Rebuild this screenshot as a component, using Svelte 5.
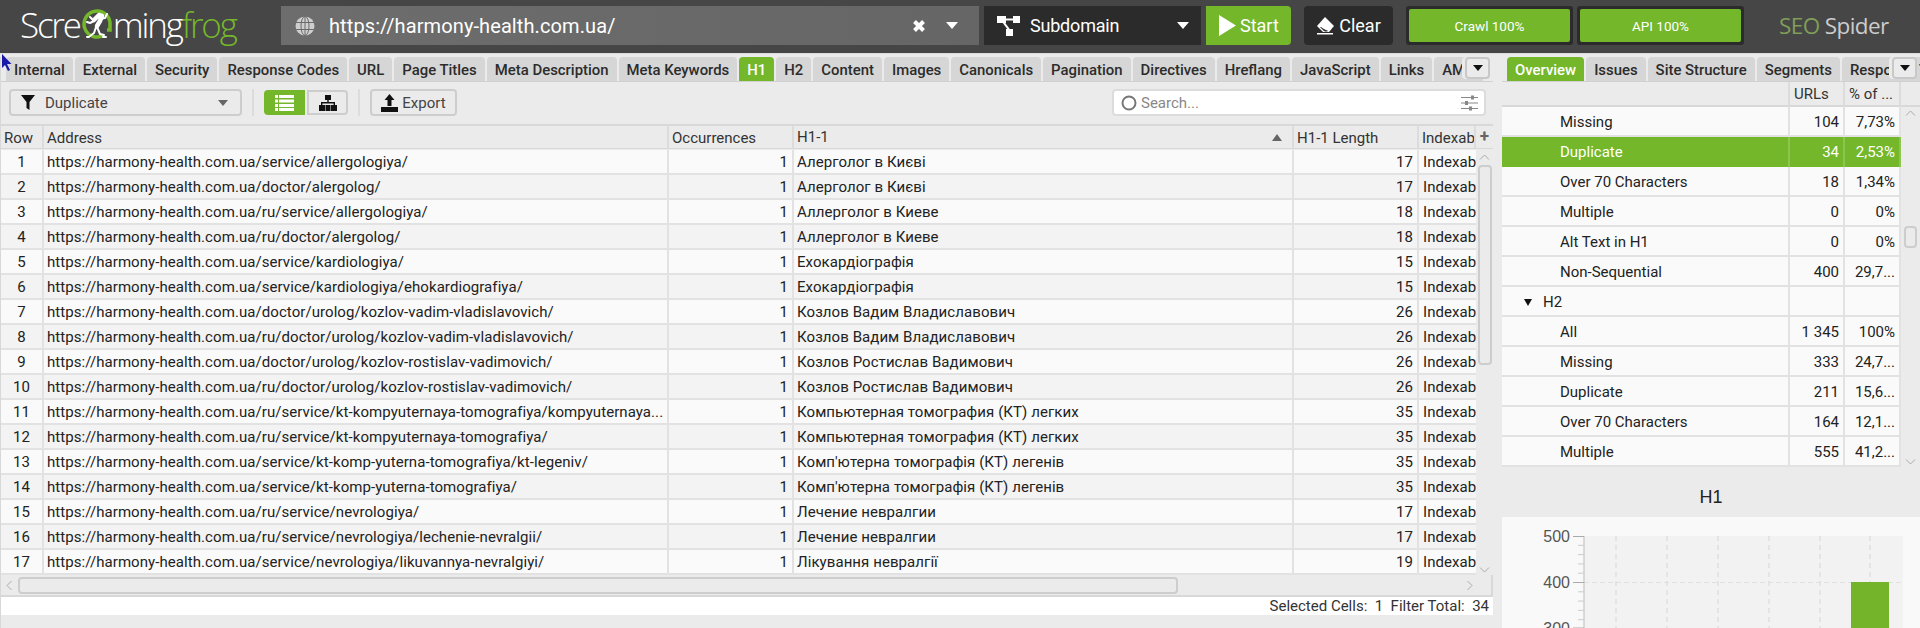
<script>
  const leftTabs = ['Internal','External','Security','Response Codes','URL','Page Titles','Meta Description','Meta Keywords','H1','H2','Content','Images','Canonicals','Pagination','Directives','Hreflang','JavaScript','Links','AMP'];
  const rightTabs = ['Overview','Issues','Site Structure','Segments','Response Times'];

  const base = 'https://harmony-health.com.ua/';
  const rows = [
    ['service/allergologiya/','Алерголог в Києві',17],
    ['doctor/alergolog/','Алерголог в Києві',17],
    ['ru/service/allergologiya/','Аллерголог в Киеве',18],
    ['ru/doctor/alergolog/','Аллерголог в Киеве',18],
    ['service/kardiologiya/','Ехокардіографія',15],
    ['service/kardiologiya/ehokardiografiya/','Ехокардіографія',15],
    ['doctor/urolog/kozlov-vadim-vladislavovich/','Козлов Вадим Владиславович',26],
    ['ru/doctor/urolog/kozlov-vadim-vladislavovich/','Козлов Вадим Владиславович',26],
    ['doctor/urolog/kozlov-rostislav-vadimovich/','Козлов Ростислав Вадимович',26],
    ['ru/doctor/urolog/kozlov-rostislav-vadimovich/','Козлов Ростислав Вадимович',26],
    ['ru/service/kt-kompyuternaya-tomografiya/kompyuternaya...','Компьютерная томография (КТ) легких',35],
    ['ru/service/kt-kompyuternaya-tomografiya/','Компьютерная томография (КТ) легких',35],
    ['service/kt-komp-yuterna-tomografiya/kt-legeniv/','Комп\'ютерна томографія (КТ) легенів',35],
    ['service/kt-komp-yuterna-tomografiya/','Комп\'ютерна томографія (КТ) легенів',35],
    ['ru/service/nevrologiya/','Лечение невралгии',17],
    ['ru/service/nevrologiya/lechenie-nevralgii/','Лечение невралгии',17],
    ['service/nevrologiya/likuvannya-nevralgiyi/','Лікування невралгії',19]
  ];

  const overview = [
    { name: 'Missing', urls: '104', pct: '7,73%' },
    { name: 'Duplicate', urls: '34', pct: '2,53%', selected: true },
    { name: 'Over 70 Characters', urls: '18', pct: '1,34%' },
    { name: 'Multiple', urls: '0', pct: '0%' },
    { name: 'Alt Text in H1', urls: '0', pct: '0%' },
    { name: 'Non-Sequential', urls: '400', pct: '29,7...' },
    { name: 'H2', urls: '', pct: '', group: true },
    { name: 'All', urls: '1 345', pct: '100%' },
    { name: 'Missing', urls: '333', pct: '24,7...' },
    { name: 'Duplicate', urls: '211', pct: '15,6...' },
    { name: 'Over 70 Characters', urls: '164', pct: '12,1...' },
    { name: 'Multiple', urls: '555', pct: '41,2...' }
  ];

  const gridX = [114, 165, 216, 267, 318, 368];
  const minorTicks = [];
  for (let i = 1; i < 12; i++) if (i % 5) minorTicks.push(19 + i * 9.3);
</script>

<div class="app">
  <header class="topbar">
    <div class="logo">
      <span>Scre</span>
      <svg class="frog" width="32" height="34" viewBox="0 0 32 34">
        <path d="M23 27a13 13 0 1 1 6-10v5h-3" fill="none" stroke="#74b72a" stroke-width="3.500"/>
        <g fill="none" stroke="#fff" stroke-linecap="round" stroke-linejoin="round">
          <path d="M13 12l5-5 3 1-2 5-3 5" stroke-width="4.500"/>
          <path d="M19 11l5-1 2-4M9 9l4 4-4 2-3-1M15 19l-2 6-4 3M16 19l3 7 4 1M8 29h-2M22 29h3" stroke-width="2"/>
        </g>
      </svg>
      <span>ming</span><span class="logo-green">frog</span>
    </div>

    <div class="urlbar">
      <svg width="20" height="20" viewBox="0 0 20 20" fill="none">
        <circle cx="10" cy="10" r="9.500" fill="#cfcfcf"/>
        <g stroke="#6a6a6a" stroke-width="1">
          <ellipse cx="10" cy="10" rx="4" ry="9.500"/>
          <path d="M1 6.500h18M1 13.500h18M10 0v20"/>
        </g>
      </svg>
      <span class="url">https://harmony-health.com.ua/</span>
      <svg class="url-x" width="14" height="14" viewBox="0 0 14 14"><path d="M2.500 2.500l9 9M11.500 2.500l-9 9" stroke="#fff" stroke-width="4"/></svg>
      <span class="caret"></span>
    </div>

    <div class="mode">
      <svg width="24" height="22" viewBox="0 0 24 22" fill="#fff">
        <rect x="0" y="1" width="9" height="7"/><rect x="16" y="1" width="7" height="7"/><rect x="9" y="14" width="7" height="7"/>
        <path d="M8 3.500h9v2H8zM5 7l6 8 1.600-1.200-6-8z"/>
      </svg>
      <span>Subdomain</span>
      <span class="caret"></span>
    </div>

    <div class="start">
      <svg width="17" height="21" viewBox="0 0 17 21"><path d="M0 0l17 10.500L0 21z" fill="#fff"/></svg>
      <span>Start</span>
    </div>

    <div class="clear">
      <svg width="19" height="19" viewBox="0 0 19 19" fill="#fff"><path d="M9 1l9 9-5 6H7l-6-6z"/><path d="M4.500 11l4 4h3" fill="#2b2b2b" stroke="#2b2b2b"/><path d="M1 17h16v1.500H1z"/></svg>
      <span>Clear</span>
    </div>

    <div class="progress"><div>Crawl 100%</div></div>
    <div class="progress second"><div>API 100%</div></div>

    <div class="brand"><span>SEO</span> Spider</div>
  </header>

  <main class="panes">
    <section class="left">
      <nav class="tabs">
        {#each leftTabs as tab}
          <span class="tab" class:active={tab === 'H1'}>{tab}</span>
        {/each}
        <button class="more"><i></i></button>
      </nav>

      <div class="toolbar">
        <div class="filter">
          <svg width="14" height="15" viewBox="0 0 14 15"><path d="M0 0h14L8.500 7v8L5.500 13V7z" fill="#111"/></svg>
          <span>Duplicate</span>
          <i class="filter-caret"></i>
        </div>
        <div class="sep"></div>
        <div class="view on">
          <svg width="19" height="16" viewBox="0 0 19 16" fill="#fff"><path d="M0 0h3v3H0zM4 0h15v3H4zM0 4.500h3v3H0zM4 4.500h15v3H4zM0 9h3v3H0zM4 9h15v3H4zM0 13h3v3H0zM4 13h15v3H4z"/></svg>
        </div>
        <div class="view">
          <svg width="18" height="16" viewBox="0 0 18 16" fill="#111"><path d="M6 0h6v5H6zM8.300 5h1.400v3H8.300zM2 7h14v3h-1.400V8.400H3.400V10H2zM0 10h6v6H0zM6.500 10h5v6h-5zM12 10h6v6h-6z"/></svg>
        </div>
        <div class="sep"></div>
        <div class="export">
          <svg width="17" height="18" viewBox="0 0 17 18" fill="#111"><path d="M8.500 0l5 6h-3v6h-4V6h-3zM0 13h17v5H0z"/></svg>
          <span>Export</span>
        </div>
        <div class="search">
          <svg width="16" height="16" viewBox="0 0 16 16"><circle cx="8" cy="8" r="6.500" fill="none" stroke="#777" stroke-width="2"/></svg>
          <span>Search...</span>
          <svg class="sliders" width="17" height="16" viewBox="0 0 17 16" fill="#888"><path d="M0 2h17v1H0zM0 7.500h17v1H0zM0 13h17v1H0z"/><path d="M10 0.500h3v4h-3zM4 6h3v4H4zM8 11.500h3v4H8z"/></svg>
        </div>
      </div>

      <div class="thead grid">
        <div class="th">Row</div>
        <div class="th">Address</div>
        <div class="th">Occurrences</div>
        <div class="th sorted">H1-1<i class="sort"></i></div>
        <div class="th">H1-1 Length</div>
        <div class="th">Indexab</div>
        <div class="plus">+</div>
      </div>

      <div class="tbody">
        <div class="rows">
          {#each rows as r, i}
            <div class="row grid" class:alt={i % 2}>
              <div class="c num">{i + 1}</div>
              <div class="c addr">{base}{r[0]}</div>
              <div class="c end">1</div>
              <div class="c title">{r[1]}</div>
              <div class="c end">{r[2]}</div>
              <div class="c index">Indexab</div>
            </div>
          {/each}
        </div>
        <div class="vscroll">
          <svg class="arrow up" width="11" height="6" viewBox="0 0 11 6"><path d="M1 5.500l4.500-4.500 4.500 4.500" fill="none" stroke="#aaa"/></svg>
          <div class="thumb-v"></div>
          <svg class="arrow down" width="11" height="6" viewBox="0 0 11 6"><path d="M1 .5l4.500 4.500 4.500-4.500" fill="none" stroke="#aaa"/></svg>
        </div>
      </div>

      <div class="hscroll">
        <svg width="6" height="11" viewBox="0 0 6 11"><path d="M5.500 1L1 5.500l4.500 4.500" fill="none" stroke="#aaa"/></svg>
        <div class="thumb-h"></div>
        <svg width="6" height="11" viewBox="0 0 6 11"><path d="M.5 1L5 5.500.5 10" fill="none" stroke="#aaa"/></svg>
      </div>

      <div class="status">Selected Cells:&nbsp; 1 &nbsp;Filter Total:&nbsp; 34</div>
    </section>

    <section class="side">
      <nav class="tabs">
        {#each rightTabs as tab}
          <span class="tab" class:active={tab === 'Overview'}>{tab}</span>
        {/each}
        <button class="more"><i></i></button>
      </nav>

      <div class="ohead ogrid">
        <div class="oh"></div>
        <div class="oh">URLs</div>
        <div class="oh">% of ...</div>
      </div>

      <div class="obody">
        <div class="orows">
          {#each overview as o}
            <div class="orow ogrid" class:selected={o.selected}>
              <div class="oname" class:group={o.group}>
                {#if o.group}<i class="tree"></i>{/if}{o.name}
              </div>
              <div class="oval">{o.urls}</div>
              <div class="oval">{o.pct}</div>
            </div>
          {/each}
        </div>
        <div class="oscroll">
          <svg width="11" height="6" viewBox="0 0 11 6"><path d="M1 5.500l4.500-4.500 4.500 4.500" fill="none" stroke="#aaa"/></svg>
          <div class="thumb-o"></div>
          <svg class="oscroll-down" width="11" height="6" viewBox="0 0 11 6"><path d="M1 .5l4.500 4.500 4.500-4.500" fill="none" stroke="#aaa"/></svg>
        </div>
      </div>

      <h2 class="chart-title">H1</h2>

      <div class="chart">
        <svg width="418" height="111" viewBox="0 0 418 111">
          <rect x="82" y="19" width="319" height="92" fill="#f2f2f2"/>
          {#each gridX as x}
            <line x1={x} x2={x} y1="19" y2="111" stroke="#e0e0e0" stroke-width="1.500" stroke-dasharray="5 4"/>
          {/each}
          <line x1="82" x2="401" y1="65.500" y2="65.500" stroke="#e0e0e0" stroke-dasharray="5 3"/>
          <rect x="349" y="65" width="38" height="46" fill="#74b42a"/>
          <line x1="82" x2="82" y1="19" y2="111" stroke="#bbb"/>
          {#each minorTicks as y}
            <line x1="76" x2="82" y1={y} y2={y} stroke="#ccc"/>
          {/each}
          <line x1="71" x2="82" y1="19.500" y2="19.500" stroke="#aaa"/>
          <line x1="71" x2="82" y1="65.500" y2="65.500" stroke="#aaa"/>
          <line x1="71" x2="82" y1="111" y2="111" stroke="#aaa"/>
          <text class="tick" x="68" y="25" text-anchor="end">500</text>
          <text class="tick" x="68" y="71" text-anchor="end">400</text>
          <text class="tick" x="68" y="117" text-anchor="end">300</text>
        </svg>
      </div>
    </section>
  </main>

  <svg class="cursor" width="11" height="17" viewBox="0 0 11 17"><path d="M1 0v14l3-3 3 6 2-1-3-6h4.500z" fill="#1a1aa8"/></svg>
</div>

<style>
  :global(body) {
    margin: 0;
    background: #ebebeb;
  }

  .app {
    position: relative;
    width: 1920px;
    height: 628px;
    overflow: hidden;
    display: flex;
    flex-direction: column;
    background: #ebebeb;
    font-family: Roboto, "Liberation Sans", sans-serif;
    font-size: 15px;
    color: #222;
  }

  /* top bar */
  .topbar {
    flex: none;
    height: 53px;
    box-sizing: border-box;
    padding: 6px 0 7px 20px;
    display: flex;
    align-items: stretch;
    background: #464646;
    border-bottom: 1px solid #464646;
    color: #fff;
  }

  .logo {
    width: 261px;
    display: flex;
    align-items: center;
    font-family: "Open Sans", sans-serif;
    font-weight: 300;
    font-size: 35px;
    letter-spacing: -2.2px;
    margin-top: -2px;
    white-space: nowrap;
  }
  .logo-green { color: #74b72a; }
  .frog { margin: 0 0 0 1px; flex: none; }

  .urlbar {
    width: 698px;
    box-sizing: border-box;
    padding: 0 21px 0 14px;
    display: flex;
    align-items: center;
    background: linear-gradient(90deg, #6d6d6d, #666);
  }
  .url {
    margin-left: 14px;
    font-size: 20px;
    letter-spacing: 0.1px;
    flex: 1;
  }
  .url-x { margin-right: 20px; }
  .caret {
    width: 0;
    height: 0;
    border-left: 6px solid transparent;
    border-right: 6px solid transparent;
    border-top: 7px solid #fff;
  }

  .mode {
    width: 217px;
    margin-left: 5px;
    box-sizing: border-box;
    padding: 0 12px 0 13px;
    display: flex;
    align-items: center;
    background: #2b2b2b;
    font-size: 18px;
    letter-spacing: -0.2px;
  }
  .mode span:nth-child(2) { margin-left: 9px; flex: 1; }

  .start {
    width: 85px;
    margin-left: 5px;
    box-sizing: border-box;
    padding-left: 13px;
    display: flex;
    align-items: center;
    gap: 4px;
    background: #74b72a;
    border-radius: 0 4px 4px 0;
    font-size: 18px;
  }

  .clear {
    width: 89px;
    margin-left: 13px;
    display: flex;
    align-items: center;
    justify-content: center;
    gap: 4px;
    background: #2b2b2b;
    border-radius: 4px;
    font-size: 18px;
  }

  .progress {
    width: 167px;
    margin-left: 13px;
    box-sizing: border-box;
    padding: 3px;
    background: #2b2b2b;
    border-radius: 3px;
  }
  .progress.second { margin-left: 4px; }
  .progress div {
    height: 100%;
    display: flex;
    align-items: center;
    justify-content: center;
    background: #74b72a;
    border-radius: 2px;
    font-size: 13.500px;
  }

  .brand {
    margin-left: 35px;
    align-self: center;
    font-family: "Open Sans", sans-serif;
    font-size: 22.500px;
    letter-spacing: -0.6px;
    color: #ccc;
    white-space: nowrap;
  }
  .brand span { color: #7f9e58; }

  /* panes */
  .panes {
    flex: 1;
    min-height: 0;
    display: flex;
    border-top: 1px solid #ddd;
    padding-top: 3px;
  }
  .left {
    width: 1493px;
    flex: none;
    box-sizing: border-box;
    border-left: 1px solid #d8d8d8;
    display: flex;
    flex-direction: column;
  }
  .side {
    width: 418px;
    margin-left: 9px;
    flex: none;
    display: flex;
    flex-direction: column;
  }

  /* tabs */
  .tabs {
    position: relative;
    flex: none;
    height: 25px;
    box-sizing: border-box;
    padding-left: 5px;
    display: flex;
    gap: 2px;
    overflow: hidden;
    border-bottom: 1px solid #d0d0d0;
  }
  .tab {
    flex: none;
    padding: 0 8px;
    line-height: 26px;
    background: #d6d6d6;
    border-radius: 4px 4px 0 0;
    font-weight: 500;
    font-size: 14.900px;
    color: #2c2c2c;
    white-space: nowrap;
  }
  .tab.active {
    background: #74b72a;
    color: #fff;
  }
  .more {
    position: absolute;
    right: 3px;
    top: 0;
    width: 25px;
    height: 22px;
    padding: 0;
    display: flex;
    align-items: center;
    justify-content: center;
    background: #ebebeb;
    border: 2px solid #c8c8c8;
    border-radius: 4px;
    box-shadow: -3px 0 0 #ebebeb;
  }
  .more i {
    border-left: 5px solid transparent;
    border-right: 5px solid transparent;
    border-top: 6px solid #111;
  }

  /* toolbar */
  .toolbar {
    flex: none;
    height: 42px;
    box-sizing: border-box;
    padding: 7px 7px 8px 8px;
    display: flex;
    align-items: stretch;
  }
  .filter {
    width: 233px;
    box-sizing: border-box;
    padding: 0 12px 0 10px;
    display: flex;
    align-items: center;
    gap: 10px;
    border: 2px solid #cdcdcd;
    border-radius: 4px;
    color: #444;
  }
  .filter span { flex: 1; }
  .filter-caret {
    border-left: 5px solid transparent;
    border-right: 5px solid transparent;
    border-top: 6px solid #666;
  }
  .sep {
    width: 2px;
    margin: 0 10px;
    background: #dcdcdc;
  }
  .view {
    width: 41px;
    margin-top: 1px;
    margin-bottom: 1px;
    box-sizing: border-box;
    display: flex;
    align-items: center;
    justify-content: center;
    border: 2px solid #cdcdcd;
    border-radius: 0 4px 4px 0;
  }
  .view.on {
    margin-right: 2px;
    background: #74b72a;
    border-color: #74b72a;
    border-radius: 4px 0 0 4px;
  }
  .export {
    width: 87px;
    box-sizing: border-box;
    display: flex;
    align-items: center;
    justify-content: center;
    gap: 4px;
    border: 2px solid #cdcdcd;
    border-radius: 4px;
    color: #444;
  }
  .search {
    width: 374px;
    margin-left: auto;
    box-sizing: border-box;
    padding: 0 6px 0 7px;
    display: flex;
    align-items: center;
    gap: 4px;
    background: #fff;
    border: 2px solid #dcdcdc;
    border-radius: 4px;
    color: #888;
  }
  .search span { flex: 1; }

  /* table */
  .grid {
    display: grid;
    grid-template-columns: 43px 625px 125px 500px 125px 57px;
  }
  .thead {
    flex: none;
    height: 25px;
    grid-template-columns: 43px 625px 125px 500px 125px 57px 17px;
    border-top: 2px solid #d8d8d8;
    border-bottom: 1px solid #d8d8d8;
    box-sizing: border-box;
  }
  .th {
    padding-left: 3px;
    line-height: 24px;
    border-right: 2px solid #dcdcdc;
    white-space: nowrap;
    overflow: hidden;
    color: #333;
  }
  .sorted {
    display: flex;
    align-items: center;
    justify-content: space-between;
  }
  .sort {
    margin-right: 10px;
    border-left: 5px solid transparent;
    border-right: 5px solid transparent;
    border-bottom: 7px solid #666;
  }
  .plus {
    text-align: center;
    line-height: 20px;
    font-weight: 700;
    font-size: 17px;
    color: #666;
  }

  .tbody {
    flex: none;
    height: 425px;
    display: flex;
    overflow: hidden;
    margin-top: 1px;
  }
  .rows { width: 1475px; flex: none; }
  .row {
    height: 25px;
    box-sizing: border-box;
    border-bottom: 2px solid #e2e2e2;
    background: #fafafa;
  }
  .row.alt { background: #f3f3f3; }
  .c {
    line-height: 25px;
    border-right: 2px solid #e2e2e2;
    white-space: nowrap;
    overflow: hidden;
    letter-spacing: 0.07px;
    color: #222;
  }
  .num { text-align: center; }
  .addr { padding-left: 3px; }
  .end { text-align: right; padding-right: 4px; }
  .title { padding-left: 3px; }
  .index { padding-left: 4px; border-right: 0; }

  .vscroll {
    flex: 1;
    position: relative;
    display: flex;
    flex-direction: column;
    align-items: center;
    padding-top: 4px;
  }
  .thumb-v {
    width: 10px;
    height: 196px;
    margin-top: 5px;
    border: 2px solid #cdcdcd;
    border-radius: 4px;
  }
  .vscroll .down { margin-top: auto; margin-bottom: 2px; }

  .hscroll {
    flex: none;
    height: 22px;
    box-sizing: border-box;
    padding: 0 18px 0 5px;
    display: flex;
    align-items: center;
    border-bottom: 2px solid #d8d8d8;
    border-right: 2px solid #d8d8d8;
  }
  .thumb-h {
    width: 1156px;
    height: 13px;
    margin: 0 auto 0 6px;
    border: 2px solid #cdcdcd;
    border-radius: 4px;
  }

  .status {
    flex: none;
    height: 18px;
    padding-right: 4px;
    background: #fff;
    line-height: 18px;
    text-align: right;
    color: #333;
  }

  /* overview */
  .ogrid {
    display: grid;
    grid-template-columns: 288px 55px 56px;
  }
  .ohead {
    flex: none;
    height: 25px;
    border-bottom: 2px solid #d8d8d8;
    box-sizing: border-box;
  }
  .oh {
    padding-left: 4px;
    line-height: 25px;
    border-right: 2px solid #dcdcdc;
    color: #333;
    white-space: nowrap;
  }
  .obody {
    flex: none;
    height: 360px;
    display: flex;
  }
  .orows { width: 399px; flex: none; }
  .orow {
    height: 30px;
    box-sizing: border-box;
    border-bottom: 2px solid #e2e2e2;
    background: #fafafa;
  }
  .orow.selected {
    background: #74b72a;
    border-bottom-color: #74b72a;
    color: #fff;
  }
  .oname {
    padding-left: 58px;
    line-height: 30px;
    border-right: 2px solid #e2e2e2;
  }
  .oname.group {
    padding-left: 22px;
    display: flex;
    align-items: center;
  }
  .tree {
    width: 0;
    margin-right: 11px;
    border-left: 4.500px solid transparent;
    border-right: 4.500px solid transparent;
    border-top: 7px solid #111;
  }
  .oval {
    padding-right: 4px;
    line-height: 30px;
    text-align: right;
    border-right: 2px solid #e2e2e2;
    white-space: nowrap;
  }
  .orow.selected .oname, .orow.selected .oval { border-right-color: #8cc651; }
  .oscroll {
    flex: 1;
    display: flex;
    flex-direction: column;
    align-items: center;
    padding-top: 3px;
  }
  .thumb-o {
    width: 9px;
    height: 18px;
    margin-top: 110px;
    border: 2px solid #cdcdcd;
    border-radius: 4px;
  }
  .oscroll-down { margin-top: auto; margin-bottom: 2px; }

  .chart-title {
    flex: none;
    height: 50px;
    margin: 0;
    font-family: "Liberation Sans", sans-serif;
    font-weight: 400;
    font-size: 18px;
    line-height: 60px;
    text-align: center;
    color: #222;
  }
  .chart {
    flex: 1;
    background: #f9f9f9;
    overflow: hidden;
  }
  .chart svg { display: block; }
  .tick {
    font-family: "Liberation Sans", sans-serif;
    font-size: 16px;
    fill: #555;
  }

  .cursor {
    position: absolute;
    left: 1px;
    top: 54px;
  }
</style>
